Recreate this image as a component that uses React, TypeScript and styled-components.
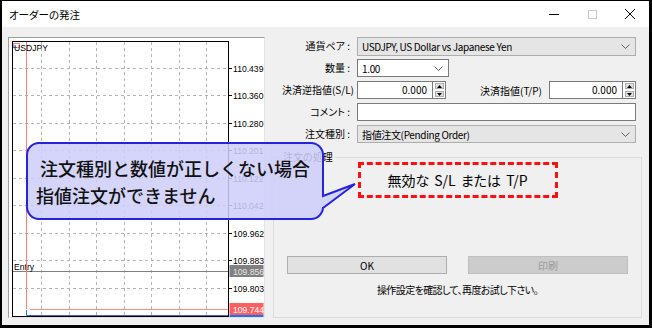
import React from "react";
import styled, { createGlobalStyle } from "styled-components";

const Global = createGlobalStyle`
  html, body { margin: 0; padding: 0; background: #fff; }
  body {
    font-family: "Noto Sans CJK JP", "Liberation Sans", sans-serif;
    font-feature-settings: "palt";
    color: #000;
  }
  * { box-sizing: border-box; }
`;

const Window = styled.div`
  position: relative;
  width: 652px;
  height: 328px;
  border-style: solid;
  border-color: #000;
  border-width: 1px 3px 3px 2px;
  display: flex;
  flex-direction: column;
  background: #f0f0f0;
  overflow: hidden;
`;

const TitleBar = styled.div`
  height: 26px;
  flex: none;
  background: #fff;
  display: flex;
  align-items: center;
  padding-left: 7px;
  font-size: 10.5px;
`;

const Title = styled.span`
  flex: 1;
`;

const WinButton = styled.div`
  width: 38px;
  height: 100%;
  display: flex;
  align-items: center;
  justify-content: center;
`;

const Body = styled.div`
  flex: 1;
  display: flex;
  gap: 8px;
  padding: 10px 7px 7px 6px;
`;

const ChartFrame = styled.div`
  width: 257px;
  height: 281px;
  flex: none;
  background: #fff;
  border-style: solid;
  border-width: 1px;
  border-color: #a0a0a0 #e3e3e3 #e3e3e3 #a0a0a0;
  svg { display: block; }
`;

const RightColumn = styled.div`
  width: 369px;
  display: flex;
  flex-direction: column;
`;

const Form = styled.div`
  display: grid;
  grid-template-columns: 84px 279px;
  grid-auto-rows: 18px;
  row-gap: 4px;
  align-items: center;
  font-size: 10px;
  & > :first-child, & > :nth-child(2) { height: 19px; }
`;

const Label = styled.div<{ $pad?: number }>`
  text-align: right;
  padding-right: ${(p) => p.$pad ?? 7}px;
  white-space: nowrap;
  font-size: 10px;
  line-height: 18px;
`;

const Combo = styled.div<{ $gray?: boolean; $width?: number }>`
  height: 18px;
  width: ${(p) => (p.$width ? `${p.$width}px` : "100%")};
  display: flex;
  align-items: center;
  padding: 0 5px 0 4px;
  background: ${(p) => (p.$gray ? "#e5e5e5" : "#fff")};
  border: 1px solid ${(p) => (p.$gray ? "#adadad" : "#7a7a7a")};
  font-size: 10px;
  letter-spacing: -0.35px;
  white-space: nowrap;
  span { flex: 1; }
`;

const TextBox = styled.div`
  height: 18px;
  width: 100%;
  background: #fff;
  border: 1px solid #7a7a7a;
`;

const SpinRow = styled.div`
  display: flex;
  align-items: center;
  height: 18px;
`;

const Spin = styled.div<{ $width: number }>`
  width: ${(p) => p.$width}px;
  height: 18px;
  display: flex;
  flex: none;
`;

const SpinInput = styled.div`
  flex: 1;
  background: #fff;
  border: 1px solid #7a7a7a;
  text-align: right;
  padding-right: 5px;
  font-size: 10px;
  line-height: 16px;
`;

const SpinButtons = styled.div`
  width: 13px;
  border: 1px solid #7a7a7a;
  border-left: none;
  background: #fff;
  display: flex;
  flex-direction: column;
  align-items: center;
  justify-content: center;
  gap: 2px;
  padding: 1px;
`;

const SpinHalf = styled.div`
  width: 9px;
  height: 7px;
  background: #e1e1e1;
  border: 1px solid #adadad;
  display: flex;
  align-items: center;
  justify-content: center;
`;

const SpinLabel = styled.div`
  flex: 1;
  text-align: right;
  padding-right: 7px;
  font-size: 10px;
  white-space: nowrap;
`;

const Group = styled.fieldset`
  flex: 1;
  margin: 8px 0 0 0;
  padding: 0;
  border: 1px solid #dcdcdc;
  display: flex;
  flex-direction: column;
  align-items: center;
  min-width: 0;
`;

const GroupLegend = styled.legend`
  margin-left: 7px;
  padding: 0 2px;
  font-size: 10px;
  line-height: 12px;
`;

const ErrorBox = styled.div`
  width: 200px;
  height: 36px;
  margin-top: -1px;
  border: 3px dashed #ff1010;
  display: flex;
  align-items: center;
  justify-content: center;
  font-size: 14px;
  word-spacing: 2px;
  background: #f0f0f0;
`;

const ButtonRow = styled.div`
  display: flex;
  gap: 21px;
  margin-top: 58px;
`;

const Button = styled.div<{ $disabled?: boolean }>`
  width: 160px;
  height: 18px;
  display: flex;
  align-items: center;
  justify-content: center;
  font-size: 10px;
  background: ${(p) => (p.$disabled ? "#cccccc" : "#e1e1e1")};
  border: 1px solid ${(p) => (p.$disabled ? "#bfbfbf" : "#adadad")};
  color: ${(p) => (p.$disabled ? "#9a9a9a" : "#000")};
`;

const Message = styled.div`
  margin-top: 9px;
  font-size: 10px;
  line-height: 14px;
  letter-spacing: -0.6px;
`;

const Callout = styled.div`
  position: absolute;
  left: 22px;
  top: 140px;
  width: 336px;
  height: 80px;
`;

const CalloutShape = styled.svg`
  position: absolute;
  inset: 0;
`;

const CalloutText = styled.div`
  position: relative;
  padding: 14px 0 0 12px;
  font-size: 18px;
  font-weight: 500;
  line-height: 27px;
  color: #111;
  font-feature-settings: normal;
  white-space: nowrap;
`;

const CalloutLine = styled.div<{ $indent?: number }>`
  text-indent: ${(p) => p.$indent ?? 0}px;
`;

const Chevron = () => (
  <svg width="9" height="5" viewBox="0 0 9 5">
    <path d="M0.5 0.5 L4.5 4.5 L8.5 0.5" fill="none" stroke="#606060" strokeWidth="1" />
  </svg>
);

const Arrow = ({ up }: { up?: boolean }) => (
  <svg width="5" height="3" viewBox="0 0 5 3">
    <path d={up ? "M0 3 L2.5 0 L5 3 Z" : "M0 0 L2.5 3 L5 0 Z"} fill="#000" />
  </svg>
);

const SpinBox = ({ width }: { width: number }) => (
  <Spin $width={width}>
    <SpinInput>0.000</SpinInput>
    <SpinButtons>
      <SpinHalf>
        <Arrow up />
      </SpinHalf>
      <SpinHalf>
        <Arrow />
      </SpinHalf>
    </SpinButtons>
  </Spin>
);

const vLines = [41.5, 69.5, 96.5, 124.5, 151.5, 179.5, 206.5];
const hLines = [
  { y: 68.5, p: "110.439" },
  { y: 95.5, p: "110.360" },
  { y: 123.5, p: "110.280" },
  { y: 150.5, p: "110.201" },
  { y: 178.5, p: "110.122" },
  { y: 205.5, p: "110.042" },
  { y: 233.5, p: "109.962" },
  { y: 260.5, p: "109.883" },
  { y: 288.5, p: "109.803" },
];

const Chart = () => (
  <svg width="255" height="279" viewBox="9 38 255 279" fontFamily="Liberation Sans, sans-serif">
    {vLines.map((x) => (
      <line key={x} x1={x} x2={x} y1={42} y2={316} stroke="#b4b4b4" strokeDasharray="3 3" />
    ))}
    {hLines.map((h) => (
      <g key={h.p}>
        <line x1={13} x2={228} y1={h.y} y2={h.y} stroke="#b4b4b4" strokeDasharray="3 3" />
        <line x1={229} x2={232} y1={h.y} y2={h.y} stroke="#000" />
        <text x={233} y={h.y + 3} fontSize="8.6" fill="#000">
          {h.p}
        </text>
      </g>
    ))}
    <line x1={13} x2={229} y1={271.5} y2={271.5} stroke="#808080" />
    <text x={14} y={270} fontSize="8.6" fill="#000">
      Entry
    </text>
    <rect x={229.5} y={265} width={34} height={12} fill="#808080" />
    <text x={233} y={274.5} fontSize="8.6" fill="#e8e8e8">
      109.856
    </text>
    <line x1={26.5} x2={26.5} y1={42} y2={309} stroke="#ff7a7a" />
    <line x1={30} x2={229} y1={309.5} y2={309.5} stroke="#ff8a8a" />
    <path d="M26.5 310 V315.5 H31" fill="none" stroke="#3a6cff" />
    <line x1={30} x2={229} y1={316} y2={316} stroke="#1830a0" strokeWidth="1.5" />
    <rect x={229.5} y={303} width={34} height={12} fill="#ff5f5f" />
    <text x={233} y={312.5} fontSize="8.6" fill="#fff">
      109.744
    </text>
    <rect x={229.5} y={315} width={34} height={4} fill="#1f6fff" />
    <rect x={12.5} y={41.5} width={216} height={275} fill="none" stroke="#000" />
    <rect x={13.5} y={43.5} width={6} height={4} fill="none" stroke="#ff8080" />
    <path d="M13 47.5 H17" stroke="#3a6cff" />
    <text x={14} y={51} fontSize="8.6" fill="#000">
      USDJPY
    </text>
  </svg>
);

export default function App() {
  return (
    <>
      <Global />
      <Window>
        <TitleBar>
          <Title>オーダーの発注</Title>
          <WinButton>
            <svg width="10" height="1" viewBox="0 0 10 1">
              <rect width="10" height="1" fill="#000" />
            </svg>
          </WinButton>
          <WinButton>
            <svg width="9" height="9" viewBox="0 0 9 9">
              <rect x="0.5" y="0.5" width="8" height="8" fill="none" stroke="#c8c8c8" />
            </svg>
          </WinButton>
          <WinButton>
            <svg width="10" height="10" viewBox="0 0 10 10">
              <path d="M0 0 L10 10 M10 0 L0 10" stroke="#000" strokeWidth="1" />
            </svg>
          </WinButton>
        </TitleBar>
        <Body>
          <ChartFrame>
            <Chart />
          </ChartFrame>
          <RightColumn>
            <Form>
              <Label>通貨ペア :</Label>
              <Combo $gray>
                <span>USDJPY, US Dollar vs Japanese Yen</span>
                <Chevron />
              </Combo>
              <Label>数量 :</Label>
              <Combo $width={92}>
                <span>1.00</span>
                <Chevron />
              </Combo>
              <Label $pad={3}>決済逆指値(S/L)</Label>
              <SpinRow>
                <SpinBox width={89} />
                <SpinLabel>決済指値(T/P)</SpinLabel>
                <SpinBox width={87} />
              </SpinRow>
              <Label>コメント :</Label>
              <TextBox />
              <Label>注文種別 :</Label>
              <Combo $gray>
                <span>指値注文(Pending Order)</span>
                <Chevron />
              </Combo>
            </Form>
            <Group>
              <GroupLegend>注文の処理</GroupLegend>
              <ErrorBox>無効な S/L または T/P</ErrorBox>
              <ButtonRow>
                <Button>OK</Button>
                <Button $disabled>印刷</Button>
              </ButtonRow>
              <Message>操作設定を確認して、再度お試し下さい。</Message>
            </Group>
          </RightColumn>
        </Body>
        <Callout>
          <CalloutShape width="336" height="80" viewBox="0 0 336 80">
            <path
              d="M15 2 H287 A12 12 0 0 1 299 14 V55 L331 43 L299 67 V66 A12 12 0 0 1 287 78 H15 A12 12 0 0 1 3 66 V14 A12 12 0 0 1 15 2 Z"
              fill="rgba(206,206,250,0.86)"
              stroke="#2424dc"
              strokeWidth="2"
              strokeLinejoin="miter"
            />
          </CalloutShape>
          <CalloutText>
            <CalloutLine $indent={4}>注文種別と数値が正しくない場合</CalloutLine>
            <CalloutLine>指値注文ができません</CalloutLine>
          </CalloutText>
        </Callout>
      </Window>
    </>
  );
}
